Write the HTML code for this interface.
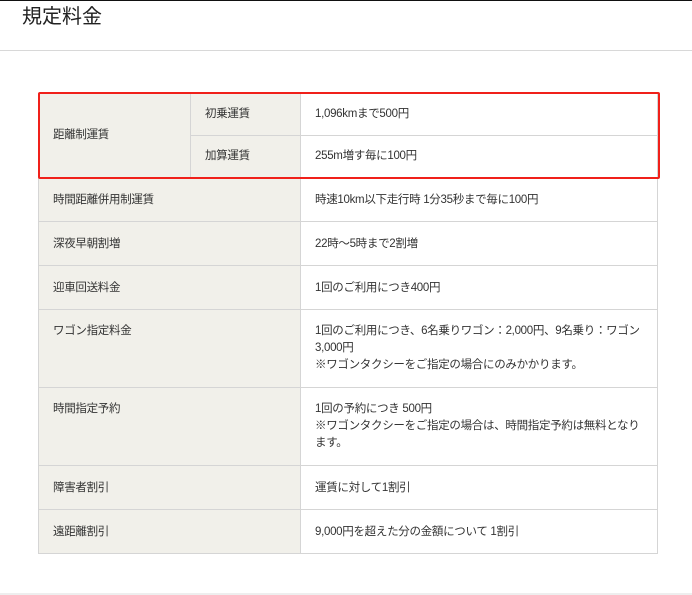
<!DOCTYPE html>
<html><head><meta charset="utf-8"><style>
body{margin:0;width:692px;height:595px;background:#fff;font-family:"Liberation Sans","Noto Sans CJK JP",sans-serif;color:#333;position:relative;overflow:hidden}
.top{position:absolute;left:0;top:0;width:692px;height:1px;background:#111}
h1{position:absolute;left:22px;top:4px;margin:0;font-size:20px;font-weight:normal;color:#222;line-height:26px}
.hr{position:absolute;left:0;top:50px;width:692px;height:1px;background:#d8d8d8}
.hr2{position:absolute;left:0;top:593px;width:692px;height:2px;background:#eee}
table{position:absolute;left:38px;top:93px;width:620px;border-collapse:collapse;font-size:11.5px;letter-spacing:-0.3px}
td{border:1px solid #d5d5d5;padding:13px 14px 13px;line-height:17px;vertical-align:top;height:18px}
td.l{background:#f1f0ea}
tr.s td{padding-top:11px;padding-bottom:11px;height:19px;line-height:19px}
tr.n td{vertical-align:middle;padding-bottom:12px}
.red{position:absolute;left:38px;top:92px;width:618px;height:83px;border:2px solid #f0201a;border-radius:2px}
</style></head><body>
<div class="top"></div>
<h1>規定料金</h1>
<div class="hr"></div>
<table>
<colgroup><col style="width:152px"><col style="width:110px"><col></colgroup>
<tr class="s"><td class="l" rowspan="2" style="vertical-align:middle">距離制運賃</td><td class="l">初乗運賃</td><td>1,096kmまで500円</td></tr>
<tr class="s"><td class="l">加算運賃</td><td>255m増す毎に100円</td></tr>
<tr class="n"><td class="l" colspan="2">時間距離併用制運賃</td><td>時速10km以下走行時 1分35秒まで毎に100円</td></tr>
<tr class="n"><td class="l" colspan="2">深夜早朝割増</td><td>22時～5時まで2割増</td></tr>
<tr class="n"><td class="l" colspan="2">迎車回送料金</td><td>1回のご利用につき400円</td></tr>
<tr><td class="l" colspan="2">ワゴン指定料金</td><td>1回のご利用につき、6名乗りワゴン：2,000円、9名乗り：ワゴン<br>3,000円<br>※ワゴンタクシーをご指定の場合にのみかかります。</td></tr>
<tr><td class="l" colspan="2">時間指定予約</td><td>1回の予約につき 500円<br>※ワゴンタクシーをご指定の場合は、時間指定予約は無料となり<br>ます。</td></tr>
<tr class="n"><td class="l" colspan="2">障害者割引</td><td>運賃に対して1割引</td></tr>
<tr class="n"><td class="l" colspan="2">遠距離割引</td><td>9,000円を超えた分の金額について 1割引</td></tr>
</table>
<div class="red"></div>
<div class="hr2"></div>
</body></html>
